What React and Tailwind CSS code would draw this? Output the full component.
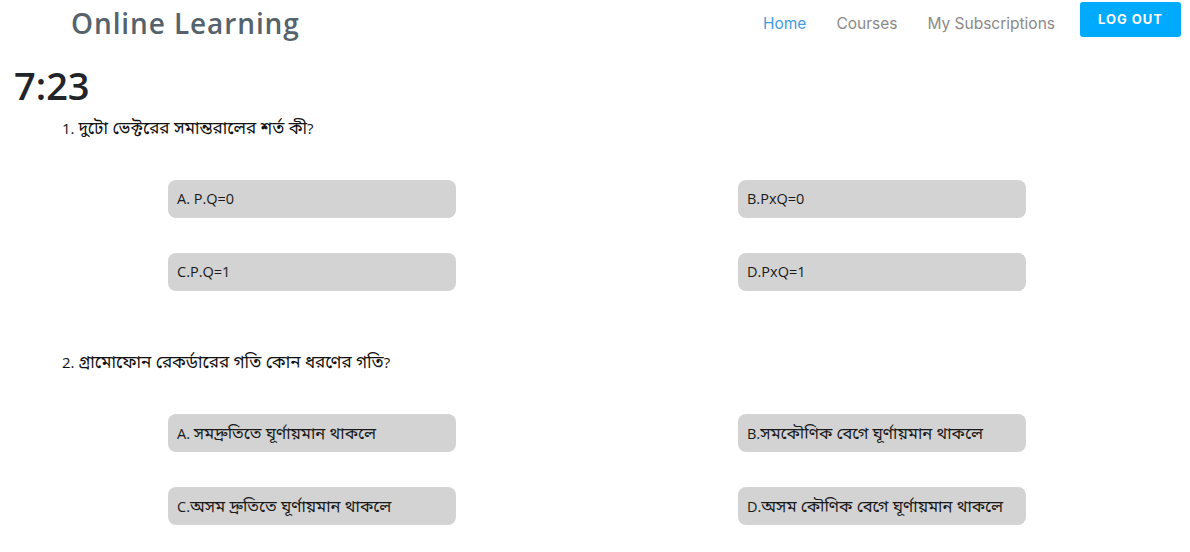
import React from 'react';

const questions = [
  {
    q: '1. দুটো ভেক্টরের সমান্তরালের শর্ত কী?',
    options: ['A. P.Q=0', 'B.PxQ=0', 'C.P.Q=1', 'D.PxQ=1'],
  },
  {
    q: '2. গ্রামোফোন রেকর্ডারের গতি কোন ধরণের গতি?',
    options: [
      'A. সমদ্রুতিতে ঘূর্ণায়মান থাকলে',
      'B.সমকৌণিক বেগে ঘূর্ণায়মান থাকলে',
      'C.অসম দ্রুতিতে ঘূর্ণায়মান থাকলে',
      'D.অসম কৌণিক বেগে ঘূর্ণায়মান থাকলে',
    ],
  },
];

const bodyFont = { fontFamily: '"Open Sans", "Noto Sans", "Noto Sans Bengali", sans-serif' };

// bangla glyphs in the fallback font come out narrow, so bump them a bit
const Mixed = ({ text }) => {
  const parts = text.split(/([\u0980-\u09FF][\u0980-\u09FF\s]*[\u0980-\u09FF]|[\u0980-\u09FF])/);
  return parts.map((p, i) =>
    /[\u0980-\u09FF]/.test(p) ? (
      <span key={i} className="text-[1.14em]">{p}</span>
    ) : (
      <span key={i}>{p}</span>
    )
  );
};

export default function App() {
  return (
    <div className="w-[1190px] h-[552px] bg-white overflow-hidden" style={bodyFont}>
      {/* Navbar */}
      <header className="h-[45px] flex items-center justify-between pl-[71px] pr-[9px]">
        <div className="text-[28px] font-semibold tracking-[0.9px] text-[#56636d] leading-none mt-[1px]">
          Online Learning
        </div>
        <nav className="flex items-center text-[15.5px] font-['Inter','Noto_Sans',sans-serif]">
          <a className="text-[#3f9ae0] mr-[30px] mt-[2px]">Home</a>
          <a className="text-[#8a8a8a] mr-[30px] mt-[2px]">Courses</a>
          <a className="text-[#8a8a8a] mr-[25px] mt-[2px]">My Subscriptions</a>
          <button className="w-[101px] h-[35px] -mt-[7px] pt-[2px] bg-[#00aaff] text-white text-[13px] font-bold tracking-[1px] rounded-[3px] font-['Inter',sans-serif]">
            LOG OUT
          </button>
        </nav>
      </header>

      {/* Timer */}
      <div className="pl-[14px] mt-[16px] text-[38px] font-semibold text-[#212529] leading-[48px]">7:23</div>

      {/* Questions */}
      <div className="mt-[7px]">
        {questions.map((item, i) => (
          <div key={i} className={i === 0 ? '' : 'mt-[59px]'}>
            <p className="pl-[62px] text-[15px] text-[#111] leading-[24px]">
              <Mixed text={item.q} />
            </p>
            <div className="mt-[40px] pl-[168px] grid grid-cols-[288px_288px] gap-x-[282px] gap-y-[35px]">
              {item.options.map((opt, j) => (
                <div
                  key={j}
                  className="h-[38px] rounded-[8px] bg-[#d3d3d3] flex items-center pl-[9px] text-[14.5px] text-[#1a1a1a] whitespace-nowrap"
                >
                  <span>
                    <Mixed text={opt} />
                  </span>
                </div>
              ))}
            </div>
          </div>
        ))}
      </div>
    </div>
  );
}
